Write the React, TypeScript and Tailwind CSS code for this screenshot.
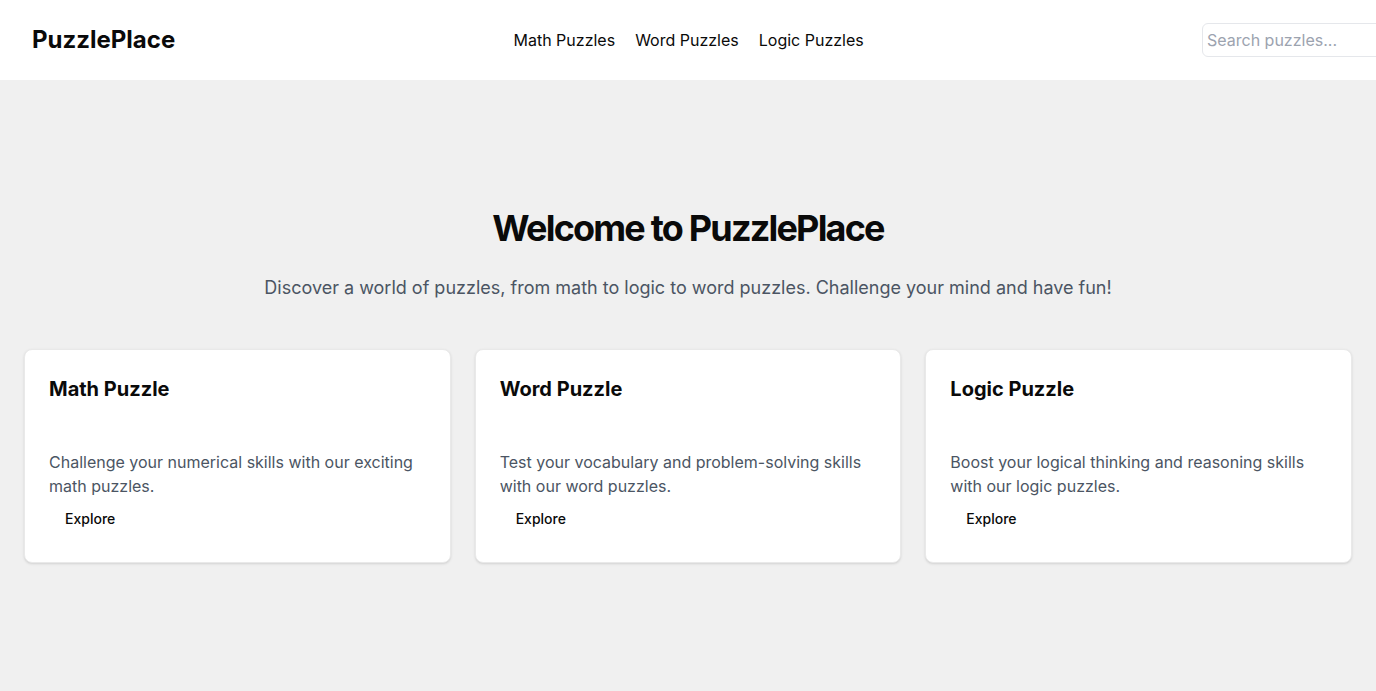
import React from "react";

const cards = [
  { title: "Math Puzzle", desc: "Challenge your numerical skills with our exciting math puzzles." },
  { title: "Word Puzzle", desc: "Test your vocabulary and problem-solving skills with our word puzzles." },
  { title: "Logic Puzzle", desc: "Boost your logical thinking and reasoning skills with our logic puzzles." },
];

export default function App() {
  return (
    <div className="min-h-[691px] bg-[#f0f0f0] overflow-hidden text-[#0a0a0a]" style={{ fontFamily: "Inter, 'Noto Sans', sans-serif" }}>
      <header className="h-20 bg-white flex items-center pl-8 overflow-hidden">
        <div className="text-2xl font-bold shrink-0">PuzzlePlace</div>
        <nav className="flex-1 flex justify-center gap-5 text-base">
          <a className="cursor-pointer">Math Puzzles</a>
          <a className="cursor-pointer">Word Puzzles</a>
          <a className="cursor-pointer">Logic Puzzles</a>
        </nav>
        <input
          placeholder="Search puzzles..."
          className="shrink-0 w-[200px] -mr-[26px] h-[34px] rounded-md border border-[#e5e7eb] px-1 text-base placeholder:text-[#9ca3af] outline-none"
        />
      </header>
      <main className="pt-32 px-6">
        <h1 className="text-4xl font-bold tracking-tighter text-center">Welcome to PuzzlePlace</h1>
        <p className="mt-[26px] text-lg text-[#4b5563] text-center">
          Discover a world of puzzles, from math to logic to word puzzles. Challenge your mind and have fun!
        </p>
        <div className="mt-[47px] grid grid-cols-3 gap-6">
          {cards.map((c) => (
            <div key={c.title} className="bg-white rounded-lg border border-[#e9e9e9] shadow-sm px-6 pt-[25px] pb-[25px]">
              <h2 className="text-xl font-bold">{c.title}</h2>
              <p className="mt-[47px] text-base text-[#4b5563] leading-6">{c.desc}</p>
              <button className="mt-[3px] px-4 py-2 text-sm font-medium">Explore</button>
            </div>
          ))}
        </div>
      </main>
    </div>
  );
}
